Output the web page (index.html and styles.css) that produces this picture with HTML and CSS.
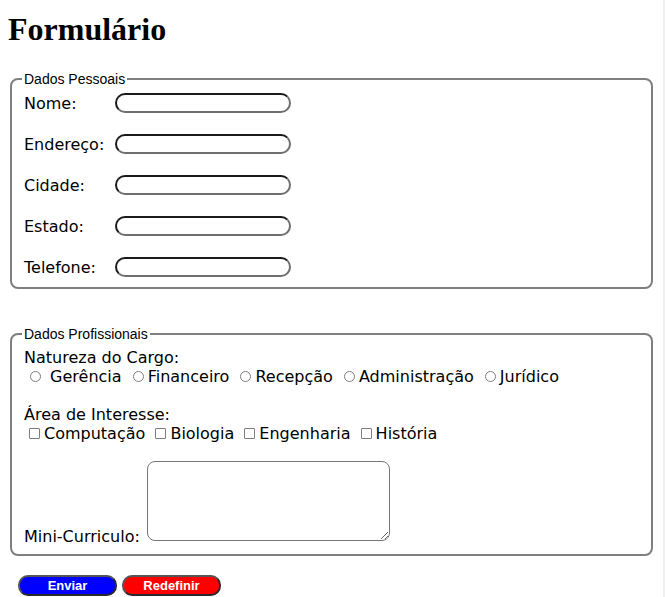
FILE: index.html
```html
<!DOCTYPE html>
<html lang="pt-BR">
<head>
<meta charset="utf-8">
<title>Formulário</title>
<link rel="stylesheet" href="styles.css">
</head>
<body>
<h1 class="title">Formulário</h1>
<form class="form">
  <fieldset class="group group-personal">
    <legend class="group-title">Dados Pessoais</legend>
    <div class="fields">
      <label class="field-label" for="nome">Nome:</label><input class="text-input" id="nome" type="text">
      <label class="field-label" for="endereco">Endereço:</label><input class="text-input" id="endereco" type="text">
      <label class="field-label" for="cidade">Cidade:</label><input class="text-input" id="cidade" type="text">
      <label class="field-label" for="estado">Estado:</label><input class="text-input" id="estado" type="text">
      <label class="field-label" for="telefone">Telefone:</label><input class="text-input" id="telefone" type="text">
    </div>
  </fieldset>

  <fieldset class="group group-professional">
    <legend class="group-title">Dados Profissionais</legend>
    <div class="line">Natureza do Cargo:</div>
    <div class="line options"><input class="radio" type="radio" name="cargo"> Gerência <input class="radio" type="radio" name="cargo">Financeiro <input class="radio" type="radio" name="cargo">Recepção <input class="radio" type="radio" name="cargo">Administração <input class="radio" type="radio" name="cargo">Jurídico</div>
    <div class="line blank"></div>
    <div class="line">Área de Interesse:</div>
    <div class="line options"><input class="check" type="checkbox">Computação <input class="check" type="checkbox">Biologia <input class="check" type="checkbox">Engenharia <input class="check" type="checkbox">História</div>
    <div class="line blank short"></div>
    <div class="cv-row">
      <label class="cv-label" for="cv">Mini-Curriculo:</label>
      <textarea class="cv-text" id="cv"></textarea>
    </div>
  </fieldset>

  <div class="actions">
    <button class="btn btn-send" type="submit">Enviar</button>
    <button class="btn btn-reset" type="reset">Redefinir</button>
  </div>
</form>
</body>
</html>
```

FILE: styles.css
```css
html {
  background: #fff;
  border-right: 2px solid #f0f0f0;
}

body {
  margin: 8px;
  font-family: "DejaVu Sans", Verdana, sans-serif;
  font-size: 16px;
  color: #000;
}

.title {
  font-family: "Liberation Serif", "Times New Roman", serif;
  font-size: 32px;
  font-weight: bold;
  margin: 3px 0 23px;
  line-height: 37px;
}

.form {
  margin: 0;
}

.group {
  margin: 0 2px;
  padding: 6px 12px 10px;
  border: 2px solid #7f7f7f;
  border-radius: 8px;
  min-width: 0;
}

.group-title {
  font-family: "Liberation Sans", Arial, sans-serif;
  font-size: 14px;
  line-height: 16px;
  padding: 0 2px;
  margin-left: -2px;
}

.group-professional {
  margin-top: 37px;
}

.fields {
  display: grid;
  grid-template-columns: 91px auto;
  grid-auto-rows: 20px;
  row-gap: 21px;
  align-items: center;
  justify-items: start;
}

.field-label {
  line-height: 19px;
}

.text-input {
  box-sizing: border-box;
  width: 176px;
  height: 20px;
  margin: 0;
  padding: 1px 8px;
  border: 2px solid;
  border-color: #1a1a1a #6e6e6e #6e6e6e #1a1a1a;
  border-radius: 10px;
  background: #fff;
  font: 13px "Liberation Sans", Arial, sans-serif;
}

.line {
  line-height: 19px;
  height: 19px;
  white-space: nowrap;
}

.line.short {
  height: 18px;
}

.radio,
.check {
  appearance: none;
  -webkit-appearance: none;
  box-sizing: border-box;
  width: 11px;
  height: 11px;
  padding: 0;
  border: 1px solid #7d7d7d;
  background: #fff;
  vertical-align: middle;
  position: relative;
  top: -1px;
}

.radio {
  width: 11px;
  height: 11px;
  margin: 0 4px 0 6px;
  border-radius: 50%;
}

.check {
  border-radius: 1px;
  margin: 0 4px 0 5px;
}

.cv-row {
  display: flex;
  align-items: flex-end;
}

.cv-label {
  line-height: 19px;
  margin: 0 7px -2px 0;
}

.cv-text {
  box-sizing: border-box;
  width: 243px;
  height: 80px;
  margin: 0 0 3px;
  border: 1px solid #767676;
  border-radius: 8px;
  background: #fff;
  resize: both;
}

.actions {
  display: flex;
  gap: 5px;
  margin: 19px 0 0 10px;
}

.btn {
  box-sizing: border-box;
  width: 99px;
  height: 21px;
  padding: 0;
  border: 2px solid;
  border-color: #555 #2a2a2a #2a2a2a #555;
  border-radius: 10px;
  color: #fff;
  font: bold 13px "Liberation Sans", Arial, sans-serif;
  line-height: 17px;
}

.btn-send {
  background: #0000ff;
}

.btn-reset {
  background: #ff0000;
}
```
